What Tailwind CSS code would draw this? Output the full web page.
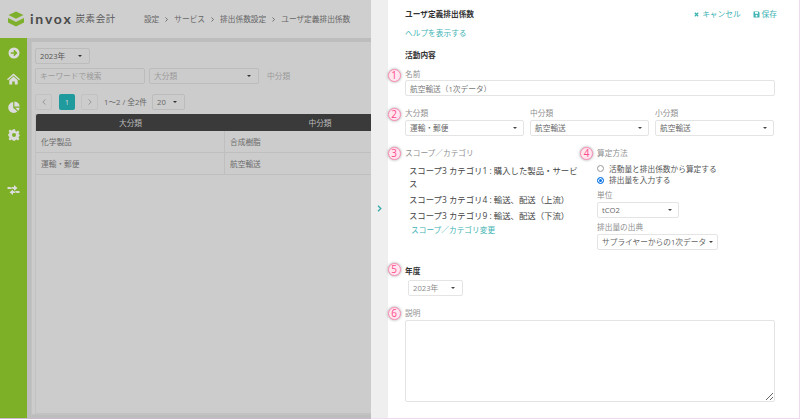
<!DOCTYPE html>
<html lang="ja">
<head>
    <meta charset="UTF-8">
    <meta name="viewport" content="width=device-width, initial-scale=1.0">
    <title>invox 炭素会計</title>
    <script src="https://cdn.jsdelivr.net/npm/@tailwindcss/browser@4"></script>
</head>
<body class="w-[800px] h-[419px] overflow-hidden flex font-['Open_Sans','Noto_Sans_CJK_JP',sans-serif] text-[7.7px] leading-[12px] bg-white">

    <!-- dimmed page behind the panel -->
    <div class="w-[371px] h-[419px] shrink-0 overflow-hidden flex flex-col bg-[#bdbdbd] border-b border-[#c9b8c9] text-[#6b6b6b]">
        <header class="h-[38px] shrink-0 bg-[#cfcfcf] flex items-center pl-[7px]">
            <svg class="w-[18px] h-[17px]" viewBox="0 0 18 17">
                <path d="M9 0.5 L16.5 4 L9 7.8 L1.5 4 Z" fill="#7fb02c"/>
                <path d="M1 6.5 L9 10.5 L17 6.5 L17 11.5 L9 15.5 L1 11.5 Z" fill="#7fb02c"/>
                <path d="M1 6.5 L9 10.5 L17 6.5" fill="none" stroke="#cfcfcf" stroke-width="0.8"/>
            </svg>
            <span class="ml-[5px] font-['Lato',sans-serif] font-bold text-[14px] tracking-[1.8px] text-[#4a4a4a]">invox</span>
            <span class="ml-[3px] text-[9.5px] tracking-[0.6px] text-[#5c5c5c]">炭素会計</span>
            <nav class="ml-[28px] flex items-center gap-[6px] whitespace-nowrap text-[#666]">
                <span>設定</span>
                <svg class="w-[3px] h-[5px]" viewBox="0 0 3 5"><path d="M0.5 0.5 L2.5 2.5 L0.5 4.5" fill="none" stroke="#666" stroke-width="0.9"/></svg>
                <span>サービス</span>
                <svg class="w-[3px] h-[5px]" viewBox="0 0 3 5"><path d="M0.5 0.5 L2.5 2.5 L0.5 4.5" fill="none" stroke="#666" stroke-width="0.9"/></svg>
                <span>排出係数設定</span>
                <svg class="w-[3px] h-[5px]" viewBox="0 0 3 5"><path d="M0.5 0.5 L2.5 2.5 L0.5 4.5" fill="none" stroke="#666" stroke-width="0.9"/></svg>
                <span>ユーザ定義排出係数</span>
            </nav>
        </header>
        <div class="flex-1 flex min-h-0">
            <aside class="w-[27px] shrink-0 bg-[#7db027] flex flex-col items-center pt-[9px] text-[#dcdcdc]">
                <svg class="w-[12px] h-[12px]" viewBox="0 0 12 12"><circle cx="6" cy="6" r="5.5" fill="currentColor"/><path d="M2.8 6 H8 M5.8 3.4 L8.4 6 L5.8 8.6" fill="none" stroke="#7db027" stroke-width="1.6"/></svg>
                <svg class="w-[13px] h-[12px] mt-[14px]" viewBox="0 0 13 12"><path d="M6.5 0.5 L13 6.2 L12 7.2 L6.5 2.6 L1 7.2 L0 6.2 Z" fill="currentColor"/><path d="M2.3 7.2 L6.5 3.6 L10.7 7.2 V11.5 H7.8 V8.4 H5.2 V11.5 H2.3 Z" fill="currentColor"/></svg>
                <svg class="w-[12px] h-[12px] mt-[16px]" viewBox="0 0 12 12"><path d="M5.2 1 V6.8 L9.4 10.6 A5.5 5.5 0 1 1 5.2 1 Z" fill="currentColor"/><path d="M6.4 0.4 A5.5 5.5 0 0 1 11.6 5.6 H6.4 Z" fill="currentColor"/><path d="M7.2 6.8 H11.6 A5.5 5.5 0 0 1 10.2 9.9 Z" fill="currentColor"/></svg>
                <svg class="w-[12px] h-[12px] mt-[16px]" viewBox="0 0 12 12"><path fill-rule="evenodd" d="M4.9 0.3 H7.1 L7.4 1.9 L8.6 2.4 L10 1.5 L11.5 3 L10.5 4.4 L11 5.6 L11.7 5.8 V7.1 L10.9 7.4 L10.5 8.5 L11.4 10 L10 11.4 L8.6 10.5 L7.4 11 L7.1 11.7 H4.9 L4.6 10.9 L3.4 10.5 L2 11.4 L0.6 10 L1.5 8.6 L1 7.4 L0.3 7.1 V4.9 L1.1 4.6 L1.5 3.4 L0.6 2 L2 0.6 L3.4 1.5 L4.6 1 Z M6 4 A2 2 0 1 0 6 8 A2 2 0 1 0 6 4 Z" fill="currentColor"/></svg>
                <svg class="w-[13px] h-[12px] mt-[43px]" viewBox="0 0 13 12"><path d="M0.5 3 H7 V1 L10.5 4 L7 7 V5 H0.5 Z" fill="currentColor"/><path d="M12.5 7 H6 V5.4 L2.5 8.2 L6 11 V9 H12.5 Z" fill="currentColor"/><path d="M2 1 L11 11" stroke="#7db027" stroke-width="0.8"/></svg>
            </aside>
            <main class="flex-1 min-w-0 pt-[4px] pl-[4px] pb-[3px]">
                <div class="h-full bg-[#cccccc] border-l border-b border-[#c2c2c2] pt-[6px] pl-[3px] flex flex-col">
                    <div class="w-[55px] h-[16px] px-[4px] flex items-center justify-between rounded-[2px] border border-[#bcbcbc] text-[#555]">
                        <span>2023年</span><i class="border-x-[2px] border-t-[2px] border-x-transparent border-t-[#333] mr-[3px]"></i>
                    </div>
                    <div class="flex items-center gap-[4px] mt-[4px] text-[#9a9a9a]">
                        <div class="w-[110px] h-[16px] px-[4px] flex items-center rounded-[2px] border border-[#bcbcbc]">キーワードで検索</div>
                        <div class="w-[110px] h-[16px] px-[4px] flex items-center justify-between rounded-[2px] border border-[#bcbcbc]">
                            <span>大分類</span><i class="border-x-[2px] border-t-[2px] border-x-transparent border-t-[#333] mr-[3px]"></i>
                        </div>
                        <span class="ml-[4px]">中分類</span>
                    </div>
                    <div class="flex items-center mt-[10px] text-[#666]">
                        <div class="w-[17px] h-[16px] flex items-center justify-center rounded-[2px] border border-[#c2c2c2]">
                            <svg class="w-[4px] h-[6px]" viewBox="0 0 4 6"><path d="M3.4 0.4 L0.8 3 L3.4 5.6" fill="none" stroke="#8a8a8a" stroke-width="0.8"/></svg>
                        </div>
                        <div class="w-[16px] h-[16px] ml-[7px] flex items-center justify-center rounded-[2px] bg-[#1f9a9d] text-[#d5d5d5]">1</div>
                        <div class="w-[17px] h-[16px] ml-[6px] flex items-center justify-center rounded-[2px] border border-[#c2c2c2]">
                            <svg class="w-[4px] h-[6px]" viewBox="0 0 4 6"><path d="M0.6 0.4 L3.2 3 L0.6 5.6" fill="none" stroke="#8a8a8a" stroke-width="0.8"/></svg>
                        </div>
                        <span class="ml-[6px] whitespace-nowrap">1〜2 / 全2件</span>
                        <div class="w-[33px] h-[16px] ml-[5px] px-[4px] flex items-center justify-between rounded-[2px] border border-[#bcbcbc]">
                            <span>20</span><i class="border-x-[2px] border-t-[2px] border-x-transparent border-t-[#333] mr-[3px]"></i>
                        </div>
                    </div>
                    <div class="flex-1 mt-[4px] w-[400px] border-l border-b border-[#c2c2c2]">
                        <div class="grid grid-cols-[189px_190px] h-[17px] items-center bg-[#3a3a3a] text-[#bdbdbd] text-center rounded-tl-[2px]">
                            <span>大分類</span><span>中分類</span>
                        </div>
                        <div class="grid grid-cols-[189px_190px] h-[22px] items-center border-b border-[#bfbfbf]">
                            <span class="pl-[5px] h-full flex items-center border-r border-[#bfbfbf]">化学製品</span><span class="pl-[5px]">合成樹脂</span>
                        </div>
                        <div class="grid grid-cols-[189px_190px] h-[22px] items-center border-b border-[#bfbfbf]">
                            <span class="pl-[5px] h-full flex items-center border-r border-[#bfbfbf]">運輸・郵便</span><span class="pl-[5px]">航空輸送</span>
                        </div>
                    </div>
                </div>
            </main>
        </div>
    </div>

    <!-- collapse strip -->
    <div class="w-[17px] h-[419px] shrink-0 bg-[#efefef] flex items-center justify-center pb-[2px] border-b border-[#eeddee]">
        <svg class="w-[5px] h-[7px]" viewBox="0 0 5 7"><path d="M1 0.8 L3.8 3.5 L1 6.2" fill="none" stroke="#35a9a9" stroke-width="1.3"/></svg>
    </div>

    <!-- edit panel -->
    <div class="relative flex-1 h-[419px] pl-[17px] pr-[24px] pt-[8px] bg-white border-r border-b border-[#efd9ef] text-[#444]">
        <div class="flex items-center justify-between h-[12px] -mr-[2px]">
            <span class="font-bold text-[#333]">ユーザ定義排出係数</span>
            <div class="flex items-center text-[#40b3b3]">
                <svg class="w-[5px] h-[5px] mr-[3px]" viewBox="0 0 6 6"><path d="M1 1 L5 5 M5 1 L1 5" stroke="currentColor" stroke-width="1.6"/></svg>
                <span>キャンセル</span>
                <svg class="w-[7px] h-[7px] ml-[12px] mr-[2px]" viewBox="0 0 7 7"><path fill-rule="evenodd" d="M0.5 0.5 H5.5 L6.5 1.5 V6.5 H0.5 Z M2 1 V2.8 H5 V1 Z M3.5 3.8 A1 1 0 1 0 3.5 5.8 A1 1 0 1 0 3.5 3.8 Z" fill="currentColor"/></svg>
                <span>保存</span>
            </div>
        </div>
        <a class="block mt-[7px] text-[#40b3b3]">ヘルプを表示する</a>
        <h2 class="mt-[10px] font-bold text-[#333]">活動内容</h2>

        <label class="block mt-[9px] h-[10px] text-[#8f8f8f] leading-[9px]">名前</label>
        <input class="block w-[370px] h-[16px] px-[4px] rounded-[2px] border border-[#e4e4e4] text-[#777] text-[7.7px] outline-none" value="航空輸送（1次データ）">

        <div class="grid grid-cols-[119px_119px_119px] gap-x-[6px] mt-[13px]">
            <div>
                <label class="block h-[11px] text-[#8f8f8f] leading-[9px]">大分類</label>
                <div class="h-[16px] px-[4px] flex items-center justify-between rounded-[2px] border border-[#e4e4e4] text-[#666]">
                    <span>運輸・郵便</span><i class="border-x-[2px] border-t-[2px] border-x-transparent border-t-[#444] mr-[2px]"></i>
                </div>
            </div>
            <div>
                <label class="block h-[11px] text-[#8f8f8f] leading-[9px]">中分類</label>
                <div class="h-[16px] px-[4px] flex items-center justify-between rounded-[2px] border border-[#e4e4e4] text-[#666]">
                    <span>航空輸送</span><i class="border-x-[2px] border-t-[2px] border-x-transparent border-t-[#444] mr-[2px]"></i>
                </div>
            </div>
            <div>
                <label class="block h-[11px] text-[#8f8f8f] leading-[9px]">小分類</label>
                <div class="h-[16px] px-[4px] flex items-center justify-between rounded-[2px] border border-[#e4e4e4] text-[#666]">
                    <span>航空輸送</span><i class="border-x-[2px] border-t-[2px] border-x-transparent border-t-[#444] mr-[2px]"></i>
                </div>
            </div>
        </div>

        <div class="flex mt-[11px]">
            <div class="w-[192px] shrink-0">
                <label class="block text-[#8f8f8f]">スコープ／カテゴリ</label>
                <div class="pl-[4px] pr-[12px] mt-[5px] text-[8.4px] leading-[13px] text-[#444]">
                    <p>スコープ3 カテゴリ1 : 購入した製品・サービス</p>
                    <p class="mt-[3px]">スコープ3 カテゴリ4 : 輸送、配送（上流）</p>
                    <p class="mt-[3px]">スコープ3 カテゴリ9 : 輸送、配送（下流）</p>
                </div>
                <a class="block ml-[6px] mt-[2px] text-[#40b3b3]">スコープ／カテゴリ変更</a>
            </div>
            <div>
                <label class="block text-[#8f8f8f]">算定方法</label>
                <div class="flex items-center mt-[4px] h-[11px] text-[#555]">
                    <input type="radio" name="method" class="appearance-none w-[7px] h-[7px] m-0 rounded-full border border-[#999] checked:border-[#0b74e5] checked:bg-[#0b74e5] checked:shadow-[inset_0_0_0_1px_white]">
                    <span class="ml-[5px]">活動量と排出係数から算定する</span>
                </div>
                <div class="flex items-center h-[12px] text-[#555]">
                    <input type="radio" name="method" checked class="appearance-none w-[7px] h-[7px] m-0 rounded-full border border-[#999] checked:border-[#0b74e5] checked:bg-[#0b74e5] checked:shadow-[inset_0_0_0_1px_white]">
                    <span class="ml-[5px]">排出量を入力する</span>
                </div>
                <label class="block mt-[5px] h-[11px] text-[#8f8f8f] leading-[9px]">単位</label>
                <div class="w-[82px] h-[16px] px-[4px] flex items-center justify-between rounded-[2px] border border-[#e4e4e4] text-[#666]">
                    <span>tCO2</span><i class="border-x-[2px] border-t-[2px] border-x-transparent border-t-[#444] mr-[2px]"></i>
                </div>
                <label class="block mt-[5px] h-[11px] text-[#8f8f8f] leading-[9px]">排出量の出典</label>
                <div class="w-[121px] h-[16px] px-[4px] flex items-center justify-between rounded-[2px] border border-[#e4e4e4] text-[#666] whitespace-nowrap">
                    <span>サプライヤーからの1次データ</span><i class="border-x-[2px] border-t-[2px] border-x-transparent border-t-[#444]"></i>
                </div>
            </div>
        </div>

        <h2 class="mt-[15px] font-bold text-[#333]">年度</h2>
        <div class="w-[55px] h-[16px] ml-[3px] mt-[3px] px-[4px] flex items-center justify-between rounded-[2px] border border-[#e4e4e4] text-[#888]">
            <span>2023年</span><i class="border-x-[2px] border-t-[2px] border-x-transparent border-t-[#444] mr-[3px]"></i>
        </div>

        <label class="block mt-[13px] h-[11px] text-[#8f8f8f] leading-[9px]">説明</label>
        <textarea class="block w-[370px] h-[82px] rounded-[2px] border border-[#e4e4e4] outline-none"></textarea>

        <!-- numbered markers -->
        <span class="absolute left-[-0.5px] top-[69px] w-[13px] h-[13px] rounded-full bg-[#ffe6ef] border-[1.5px] border-[#ff8fb8] shadow-[0_0_3px_#999] text-[#ff4a8c] text-[10px] leading-[10px] text-center">1</span>
        <span class="absolute left-[-0.5px] top-[108px] w-[13px] h-[13px] rounded-full bg-[#ffe6ef] border-[1.5px] border-[#ff8fb8] shadow-[0_0_3px_#999] text-[#ff4a8c] text-[10px] leading-[10px] text-center">2</span>
        <span class="absolute left-[-0.5px] top-[147px] w-[13px] h-[13px] rounded-full bg-[#ffe6ef] border-[1.5px] border-[#ff8fb8] shadow-[0_0_3px_#999] text-[#ff4a8c] text-[10px] leading-[10px] text-center">3</span>
        <span class="absolute left-[192px] top-[147px] w-[13px] h-[13px] rounded-full bg-[#ffe6ef] border-[1.5px] border-[#ff8fb8] shadow-[0_0_3px_#999] text-[#ff4a8c] text-[10px] leading-[10px] text-center">4</span>
        <span class="absolute left-[-0.5px] top-[263px] w-[13px] h-[13px] rounded-full bg-[#ffe6ef] border-[1.5px] border-[#ff8fb8] shadow-[0_0_3px_#999] text-[#ff4a8c] text-[10px] leading-[10px] text-center">5</span>
        <span class="absolute left-[-0.5px] top-[307px] w-[13px] h-[13px] rounded-full bg-[#ffe6ef] border-[1.5px] border-[#ff8fb8] shadow-[0_0_3px_#999] text-[#ff4a8c] text-[10px] leading-[10px] text-center">6</span>
    </div>

</body>
</html>
